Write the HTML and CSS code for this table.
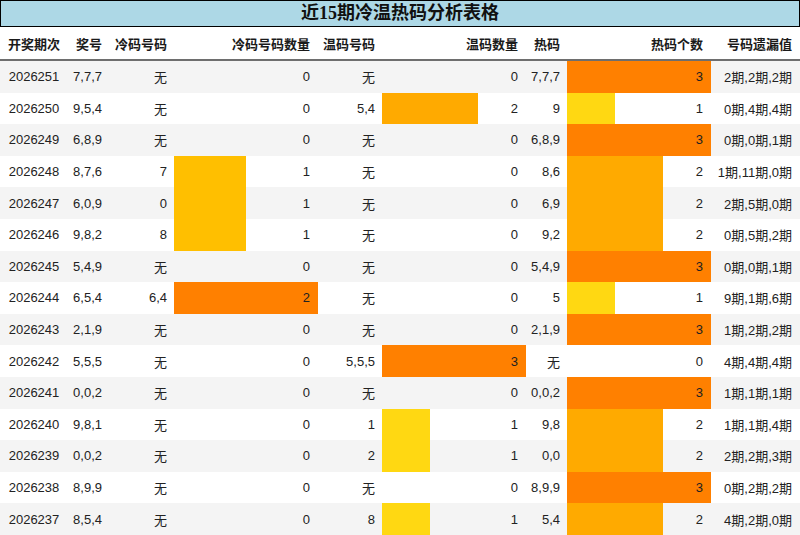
FILE: index.html
```html
<!DOCTYPE html>
<html lang="zh">
<head>
<meta charset="utf-8">
<title>近15期冷温热码分析表格</title>
<link rel="stylesheet" href="styles.css">
</head>
<body>
<div class="title">近15期冷温热码分析表格</div>
<div class="table">
  <div class="row head">
    <div class="c center">开奖期次</div>
    <div class="c">奖号</div>
    <div class="c">冷码号码</div>
    <div class="c bc">冷码号码数量</div>
    <div class="c">温码号码</div>
    <div class="c bc">温码数量</div>
    <div class="c">热码</div>
    <div class="c bc">热码个数</div>
    <div class="c last">号码遗漏值</div>
  </div>

  <div class="row">
    <div class="c center">2026251</div><div class="c">7,7,7</div><div class="c">无</div>
    <div class="c bc"><span class="v">0</span></div>
    <div class="c">无</div>
    <div class="c bc"><span class="v">0</span></div>
    <div class="c">7,7,7</div>
    <div class="c bc"><span class="bar b-full" style="width:100%"></span><span class="v">3</span></div>
    <div class="c last">2期,2期,2期</div>
  </div>
  <div class="row">
    <div class="c center">2026250</div><div class="c">9,5,4</div><div class="c">无</div>
    <div class="c bc"><span class="v">0</span></div>
    <div class="c">5,4</div>
    <div class="c bc"><span class="bar b-two" style="width:66.67%"></span><span class="v">2</span></div>
    <div class="c">9</div>
    <div class="c bc"><span class="bar b-one" style="width:33.33%"></span><span class="v">1</span></div>
    <div class="c last">0期,4期,4期</div>
  </div>
  <div class="row">
    <div class="c center">2026249</div><div class="c">6,8,9</div><div class="c">无</div>
    <div class="c bc"><span class="v">0</span></div>
    <div class="c">无</div>
    <div class="c bc"><span class="v">0</span></div>
    <div class="c">6,8,9</div>
    <div class="c bc"><span class="bar b-full" style="width:100%"></span><span class="v">3</span></div>
    <div class="c last">0期,0期,1期</div>
  </div>
  <div class="row">
    <div class="c center">2026248</div><div class="c">8,7,6</div><div class="c">7</div>
    <div class="c bc"><span class="bar b-half" style="width:50%"></span><span class="v">1</span></div>
    <div class="c">无</div>
    <div class="c bc"><span class="v">0</span></div>
    <div class="c">8,6</div>
    <div class="c bc"><span class="bar b-two" style="width:66.67%"></span><span class="v">2</span></div>
    <div class="c last">1期,11期,0期</div>
  </div>
  <div class="row">
    <div class="c center">2026247</div><div class="c">6,0,9</div><div class="c">0</div>
    <div class="c bc"><span class="bar b-half" style="width:50%"></span><span class="v">1</span></div>
    <div class="c">无</div>
    <div class="c bc"><span class="v">0</span></div>
    <div class="c">6,9</div>
    <div class="c bc"><span class="bar b-two" style="width:66.67%"></span><span class="v">2</span></div>
    <div class="c last">2期,5期,0期</div>
  </div>
  <div class="row">
    <div class="c center">2026246</div><div class="c">9,8,2</div><div class="c">8</div>
    <div class="c bc"><span class="bar b-half" style="width:50%"></span><span class="v">1</span></div>
    <div class="c">无</div>
    <div class="c bc"><span class="v">0</span></div>
    <div class="c">9,2</div>
    <div class="c bc"><span class="bar b-two" style="width:66.67%"></span><span class="v">2</span></div>
    <div class="c last">0期,5期,2期</div>
  </div>
  <div class="row">
    <div class="c center">2026245</div><div class="c">5,4,9</div><div class="c">无</div>
    <div class="c bc"><span class="v">0</span></div>
    <div class="c">无</div>
    <div class="c bc"><span class="v">0</span></div>
    <div class="c">5,4,9</div>
    <div class="c bc"><span class="bar b-full" style="width:100%"></span><span class="v">3</span></div>
    <div class="c last">0期,0期,1期</div>
  </div>
  <div class="row">
    <div class="c center">2026244</div><div class="c">6,5,4</div><div class="c">6,4</div>
    <div class="c bc"><span class="bar b-full" style="width:100%"></span><span class="v">2</span></div>
    <div class="c">无</div>
    <div class="c bc"><span class="v">0</span></div>
    <div class="c">5</div>
    <div class="c bc"><span class="bar b-one" style="width:33.33%"></span><span class="v">1</span></div>
    <div class="c last">9期,1期,6期</div>
  </div>
  <div class="row">
    <div class="c center">2026243</div><div class="c">2,1,9</div><div class="c">无</div>
    <div class="c bc"><span class="v">0</span></div>
    <div class="c">无</div>
    <div class="c bc"><span class="v">0</span></div>
    <div class="c">2,1,9</div>
    <div class="c bc"><span class="bar b-full" style="width:100%"></span><span class="v">3</span></div>
    <div class="c last">1期,2期,2期</div>
  </div>
  <div class="row">
    <div class="c center">2026242</div><div class="c">5,5,5</div><div class="c">无</div>
    <div class="c bc"><span class="v">0</span></div>
    <div class="c">5,5,5</div>
    <div class="c bc"><span class="bar b-full" style="width:100%"></span><span class="v">3</span></div>
    <div class="c">无</div>
    <div class="c bc"><span class="v">0</span></div>
    <div class="c last">4期,4期,4期</div>
  </div>
  <div class="row">
    <div class="c center">2026241</div><div class="c">0,0,2</div><div class="c">无</div>
    <div class="c bc"><span class="v">0</span></div>
    <div class="c">无</div>
    <div class="c bc"><span class="v">0</span></div>
    <div class="c">0,0,2</div>
    <div class="c bc"><span class="bar b-full" style="width:100%"></span><span class="v">3</span></div>
    <div class="c last">1期,1期,1期</div>
  </div>
  <div class="row">
    <div class="c center">2026240</div><div class="c">9,8,1</div><div class="c">无</div>
    <div class="c bc"><span class="v">0</span></div>
    <div class="c">1</div>
    <div class="c bc"><span class="bar b-one" style="width:33.33%"></span><span class="v">1</span></div>
    <div class="c">9,8</div>
    <div class="c bc"><span class="bar b-two" style="width:66.67%"></span><span class="v">2</span></div>
    <div class="c last">1期,1期,4期</div>
  </div>
  <div class="row">
    <div class="c center">2026239</div><div class="c">0,0,2</div><div class="c">无</div>
    <div class="c bc"><span class="v">0</span></div>
    <div class="c">2</div>
    <div class="c bc"><span class="bar b-one" style="width:33.33%"></span><span class="v">1</span></div>
    <div class="c">0,0</div>
    <div class="c bc"><span class="bar b-two" style="width:66.67%"></span><span class="v">2</span></div>
    <div class="c last">2期,2期,3期</div>
  </div>
  <div class="row">
    <div class="c center">2026238</div><div class="c">8,9,9</div><div class="c">无</div>
    <div class="c bc"><span class="v">0</span></div>
    <div class="c">无</div>
    <div class="c bc"><span class="v">0</span></div>
    <div class="c">8,9,9</div>
    <div class="c bc"><span class="bar b-full" style="width:100%"></span><span class="v">3</span></div>
    <div class="c last">0期,2期,2期</div>
  </div>
  <div class="row">
    <div class="c center">2026237</div><div class="c">8,5,4</div><div class="c">无</div>
    <div class="c bc"><span class="v">0</span></div>
    <div class="c">8</div>
    <div class="c bc"><span class="bar b-one" style="width:33.33%"></span><span class="v">1</span></div>
    <div class="c">5,4</div>
    <div class="c bc"><span class="bar b-two" style="width:66.67%"></span><span class="v">2</span></div>
    <div class="c last">4期,2期,0期</div>
  </div>
</div>
</body>
</html>
```
FILE: styles.css
```css
html, body {
  margin: 0;
  padding: 0;
  background: #ffffff;
}

body {
  width: 800px;
  height: 535px;
  overflow: hidden;
  font-family: "Liberation Sans", "Noto Sans CJK SC", sans-serif;
  font-size: 13px;
  color: #222222;
}

.title {
  height: 25px;
  line-height: 25px;
  border: 1px solid #000000;
  background: #add8e6;
  text-align: center;
  font-family: "Liberation Serif", "Noto Sans CJK SC", serif;
  font-weight: bold;
  font-size: 18px;
  color: #111111;
}

.table {
  display: flex;
  flex-direction: column;
}

.row {
  display: grid;
  grid-template-columns: 68px 41px 65px 144px 64px 144px 41px 144px 89px;
  height: 31.6px;
}

.row:nth-child(even) {
  background: #f4f4f4;
}

.row.head {
  height: 32px;
  background: #ffffff;
  border-bottom: 2px solid #6e6e6e;
  font-family: "Noto Sans CJK SC", sans-serif;
  font-weight: bold;
  color: #1a1a1a;
}

.c {
  display: flex;
  align-items: center;
  justify-content: flex-end;
  padding-right: 7px;
  white-space: nowrap;
  min-width: 0;
}

.c.center {
  justify-content: center;
  padding-right: 0;
}

.c.bc {
  position: relative;
  padding-right: 8px;
}

.c.last {
  padding-right: 8px;
}

.bar {
  position: absolute;
  left: 0;
  top: 0;
  bottom: 0;
}

.v {
  position: relative;
}

.b-full { background: #ff8000; }
.b-two  { background: #ffaa00; }
.b-half { background: #ffbf00; }
.b-one  { background: #ffd812; }
```
